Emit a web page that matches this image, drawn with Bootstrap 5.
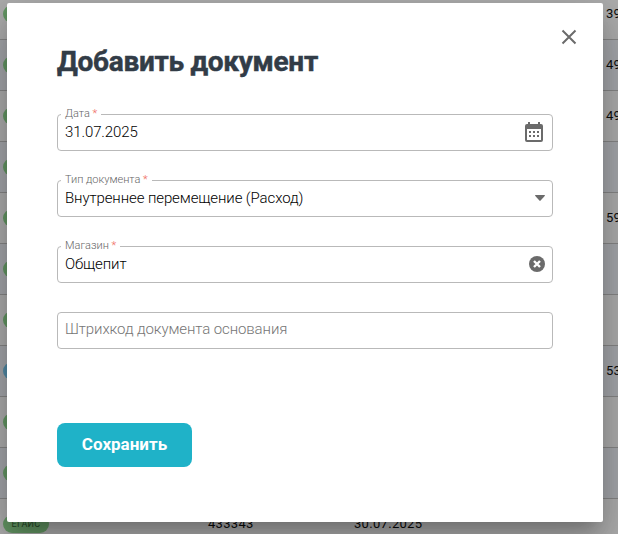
<!DOCTYPE html>
<html lang="ru">
<head>
<meta charset="utf-8">
<meta name="viewport" content="width=device-width, initial-scale=1">
<title>Добавить документ</title>
<link href="https://cdn.jsdelivr.net/npm/bootstrap@5.3.0/dist/css/bootstrap.min.css" rel="stylesheet">
<style>
body{font-family:Roboto,"Liberation Sans",sans-serif;height:534px;background:#fff}
.doc-list{margin-top:-11px}
.doc-line{height:51px;border-bottom:1px solid #c6c6c6;font-size:13px;letter-spacing:.3px;color:#111;padding-left:3px}
.doc-line:nth-child(even){background:#f4f7fc}
.tag{width:46px;height:18px;border-radius:9px;background:#94df94;color:#356b38;font-size:9px;line-height:18px;text-align:center}
.tag-blue{background:#7accf5}
.c-type{width:205px}.c-num{width:146px}.c-date{width:252px}
.shade{background:rgba(0,0,0,.32);padding:3px 15px 12px 7px}
.dialog-box{height:519px;border:0;border-radius:2px;padding:0 50px;box-shadow:0 11px 15px -7px rgba(0,0,0,.2),0 24px 38px 3px rgba(0,0,0,.14),0 9px 46px 8px rgba(0,0,0,.12)}
.x-btn{top:26px;right:26px;width:16px;height:16px}
.x-btn svg{display:block}
.dialog-title{font-size:28px;font-weight:700;line-height:34px;color:#323c47;letter-spacing:-.3px;-webkit-text-stroke:.5px #323c47;margin:42px 0 35px}
.field{height:37px;border:1px solid #b9b9b9;border-radius:4px;padding:0 7px;font-size:15px;font-weight:300;letter-spacing:-.1px;color:#000;margin-bottom:29px}
.field-value{line-height:20px;padding-bottom:1px}
.field svg{margin-bottom:2px}
.field-label{left:3px;top:-8px;padding:0 4px;background:#fff;font-size:11px;line-height:14px;letter-spacing:0;color:#666}
.field-label span{color:#ef6b62}
.hint{color:#757575;padding-bottom:4px}
.save-btn{width:135px;height:44px;margin-top:45px;border-radius:8px;background:#1fb2c8;color:#fff;font-size:17px;font-weight:700;line-height:42px;padding:0 0 2px;border:0}
</style>
<script src="https://cdn.jsdelivr.net/npm/bootstrap@5.3.0/dist/js/bootstrap.bundle.min.js"></script>
</head>
<body class="position-relative overflow-hidden">
<div class="doc-list">
  <div class="doc-line d-flex align-items-center"><div class="c-type flex-shrink-0"><div class="tag"></div></div><div class="c-num flex-shrink-0"></div><div class="c-date flex-shrink-0"></div><div>39</div></div>
  <div class="doc-line d-flex align-items-center"><div class="c-type flex-shrink-0"><div class="tag"></div></div><div class="c-num flex-shrink-0"></div><div class="c-date flex-shrink-0"></div><div>49</div></div>
  <div class="doc-line d-flex align-items-center"><div class="c-type flex-shrink-0"><div class="tag"></div></div><div class="c-num flex-shrink-0"></div><div class="c-date flex-shrink-0"></div><div>49</div></div>
  <div class="doc-line d-flex align-items-center"><div class="c-type"><div class="tag"></div></div></div>
  <div class="doc-line d-flex align-items-center"><div class="c-type flex-shrink-0"><div class="tag"></div></div><div class="c-num flex-shrink-0"></div><div class="c-date flex-shrink-0"></div><div>59</div></div>
  <div class="doc-line d-flex align-items-center"><div class="c-type"><div class="tag"></div></div></div>
  <div class="doc-line d-flex align-items-center"><div class="c-type"><div class="tag"></div></div></div>
  <div class="doc-line d-flex align-items-center"><div class="c-type flex-shrink-0"><div class="tag tag-blue"></div></div><div class="c-num flex-shrink-0"></div><div class="c-date flex-shrink-0"></div><div>53</div></div>
  <div class="doc-line d-flex align-items-center"><div class="c-type"><div class="tag"></div></div></div>
  <div class="doc-line d-flex align-items-center"><div class="c-type"><div class="tag"></div></div></div>
  <div class="doc-line d-flex align-items-center"><div class="c-type"><div class="tag">ЕГАИС</div></div><div class="c-num">433343</div><div class="c-date">30.07.2025</div></div>
</div>
<div class="shade position-absolute top-0 start-0 w-100 h-100">
  <div class="dialog-box card position-relative bg-white">
    <button class="x-btn btn p-0 border-0 position-absolute" aria-label="Закрыть"><svg width="16" height="16" viewBox="0 0 16 16" fill="none" stroke="#6b6b6b" stroke-width="2"><path d="M1.5 1.5l13 13M14.5 1.5l-13 13"/></svg></button>
    <h1 class="dialog-title">Добавить документ</h1>
    <div class="field position-relative d-flex align-items-center justify-content-between">
      <label class="field-label position-absolute">Дата <span>*</span></label>
      <div class="field-value">31.07.2025</div>
      <svg width="22" height="22" viewBox="0 0 22 22"><path fill="#6b6b6b" fill-rule="evenodd" d="M5 1h2v2h8V1h2v2h1q2 0 2 2v14q0 2-2 2H4q-2 0-2-2V5q0-2 2-2h1zM4 8v11h14V8zM6 10h2v2H6zm4 0h2v2h-2zm4 0h2v2h-2zM6 14h2v2H6zm4 0h2v2h-2zm4 0h2v2h-2z"/></svg>
    </div>
    <div class="field position-relative d-flex align-items-center justify-content-between">
      <label class="field-label position-absolute">Тип документа <span>*</span></label>
      <div class="field-value">Внутреннее перемещение (Расход)</div>
      <svg width="10" height="6" viewBox="0 0 10 6"><path fill="#6b6b6b" d="M.5 0h9q.8.2.2 1L5.6 5.6q-.6.6-1.2 0L.3 1Q-.3.2.5 0z"/></svg>
    </div>
    <div class="field position-relative d-flex align-items-center justify-content-between">
      <label class="field-label position-absolute">Магазин <span>*</span></label>
      <div class="field-value">Общепит</div>
      <svg width="16" height="16" viewBox="0 0 16 16"><circle cx="8" cy="8" r="8" fill="#6b6b6b"/><path d="M5 5l6 6M11 5l-6 6" stroke="#fff" stroke-width="2.4"/></svg>
    </div>
    <div class="field d-flex align-items-center">
      <div class="field-value hint">Штрихкод документа основания</div>
    </div>
    <button class="save-btn btn">Сохранить</button>
  </div>
</div>
</body>
</html>
